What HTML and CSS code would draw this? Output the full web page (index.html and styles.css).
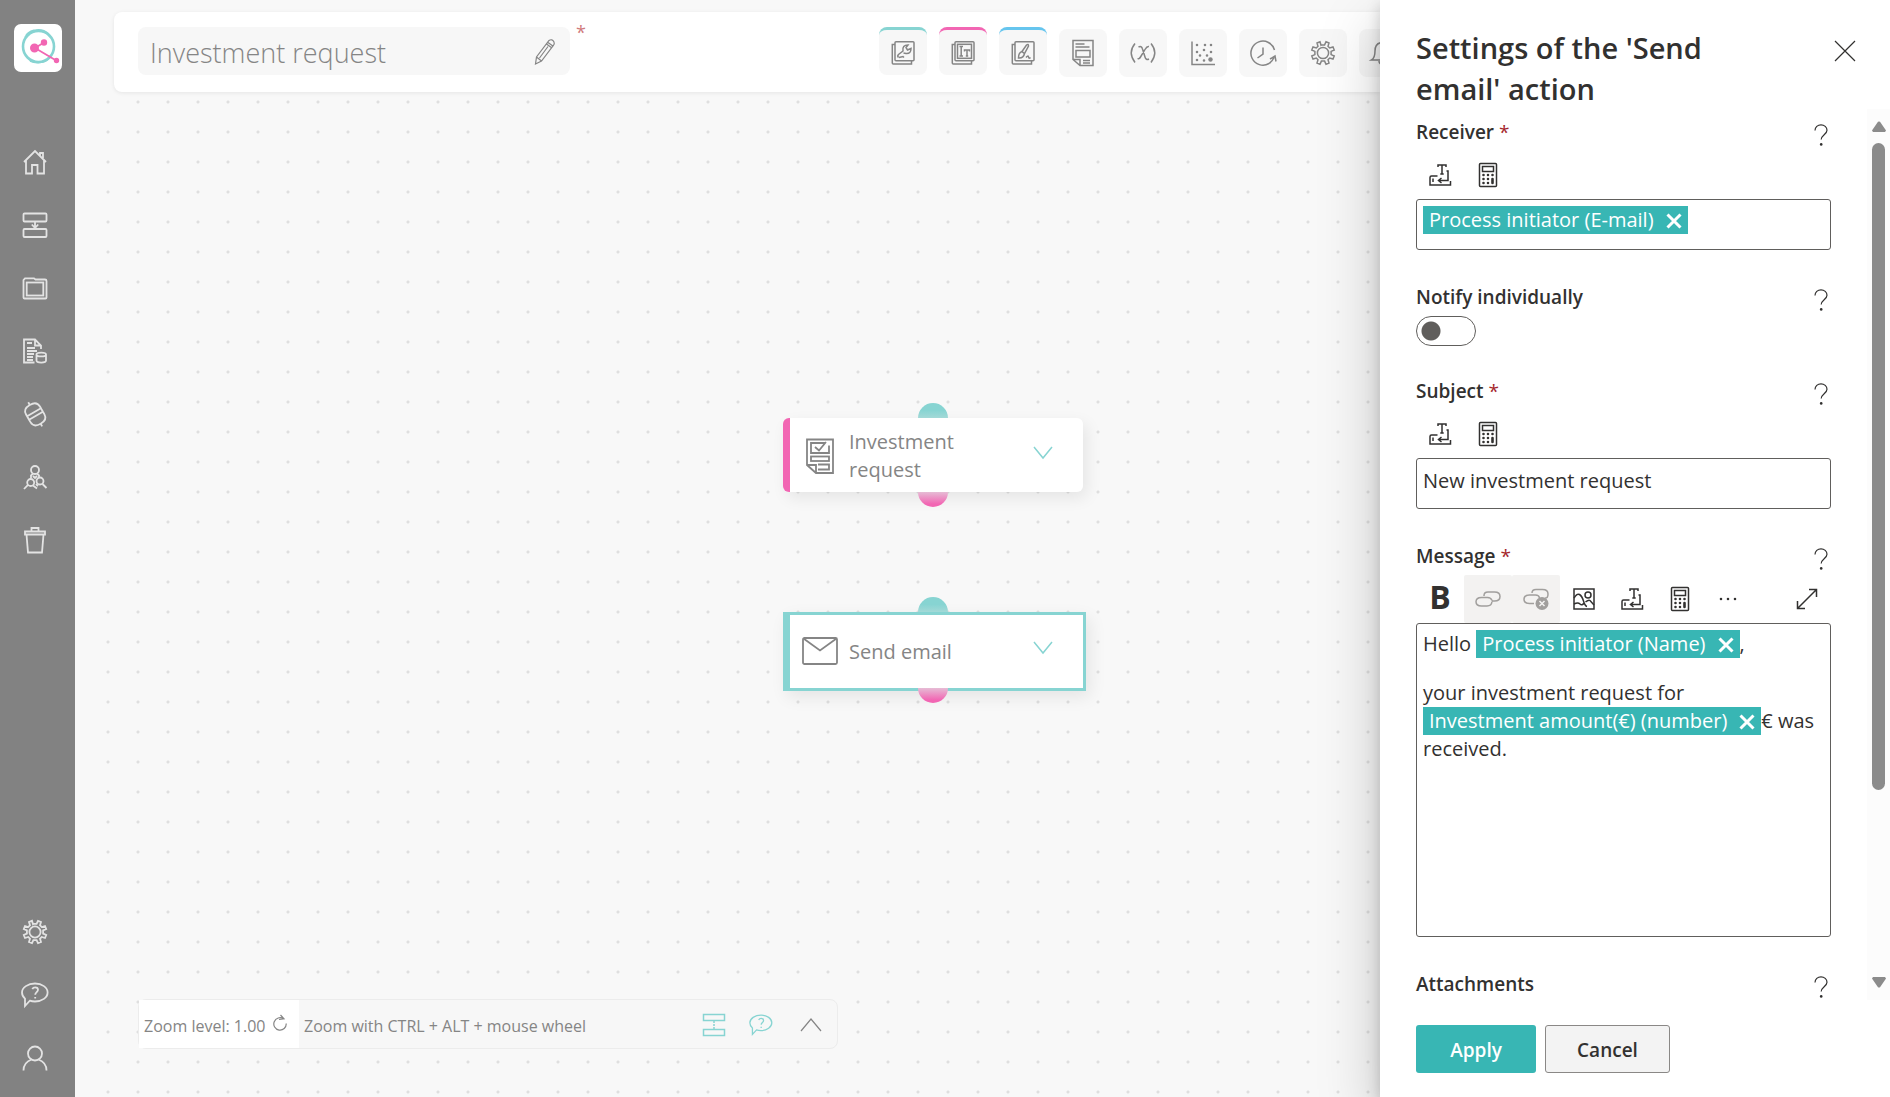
FILE: index.html
```html
<!DOCTYPE html>
<html lang="en">
<head>
<meta charset="utf-8">
<title>Investment request</title>
<link rel="stylesheet" href="styles.css">
</head>
<body>
<svg class="sprite" aria-hidden="true">
  <symbol id="i-gear" viewBox="0 0 26 26"><path d="M11 5.200 10 1.800 7 3 8 6.300 6.300 8 3 7 1.800 10 4.900 11.400V14.600L1.800 16 3 19 6.300 18 8 19.700 7 23 10 24.200 11.400 21.100H14.600L16 24.200 19 23 18 19.700 19.700 18 23 19 24.200 16 21.100 14.600V11.400L24.200 10 23 7 19.700 8 18 6.300 19 3 16 1.800 14.600 4.900H11.400Z"/><circle cx="13" cy="13" r="5.600"/></symbol>
  <symbol id="i-help" viewBox="0 0 30 28"><path d="M15 2.500c7 0 12.600 4 12.600 9s-5.600 9-12.600 9c-2 0-3.600-.2-5.200-.8L5 25V17.600C3 15.900 2 14 2 11.500c0-5 6-9 13-9Z"/><path d="M12.300 8.200c.6-1.300 1.600-1.900 2.900-1.900 1.600 0 2.800 1 2.800 2.500 0 2.300-2.800 2.400-2.800 5M15.200 16v1.600"/></symbol>
  <symbol id="i-question" viewBox="0 0 16 24"><path d="M2 7.500C2 4.200 4.700 1.800 8 1.800s6 2.300 6 5.500c0 4-5.800 5-5.800 9.200"/><circle cx="8.200" cy="21.400" r="1.300" class="fill"/></symbol>
  <symbol id="i-insert" viewBox="0 0 24 24"><path d="M10 4V2h8v2M14 2v9M12.300 11h3.400M18.500 8H20v9.500h-9M13.500 15l-3 2.500 3 2.500M9.500 13H3.500Q2 13 2 14.500V22h20.500v-4M5 15.500V19"/></symbol>
  <symbol id="i-calc" viewBox="0 0 24 26"><rect x="3.500" y="1.500" width="17" height="23" rx="1"/><rect x="6.500" y="4.500" width="11" height="5"/><path class="dots" d="M7.500 13h.01M12 13h.01M16.500 13h.01M7.500 17h.01M12 17h.01M7.500 21h.01M12 21h.01M16.500 17v4"/></symbol>
  <symbol id="i-chevron" viewBox="0 0 20 14"><path d="M1 1l9 11 9-11"/></symbol>
  <symbol id="i-cross" viewBox="0 0 16 16"><path d="M1.500 1.500l13 13M14.500 1.500l-13 13"/></symbol>
  <symbol id="i-stack" viewBox="0 0 26 26"><rect x="5" y="1.800" width="19" height="19" rx="1"/><path d="M5 4.500H2.300v18.500q0 1 1 1H21.500v-3"/></symbol>
</svg>

<nav class="sidebar" aria-label="Main">
  <a class="logo" href="#" aria-label="Start">
    <svg viewBox="0 0 48 48" width="48" height="48">
      <g fill="none" stroke="#87d4d2"><ellipse cx="24.500" cy="22.500" rx="15.500" ry="15.500" stroke-width="2.600"/><path stroke-width="1.400" d="M11 13C17 5 27 3 35 10M14 34c7 7 17 6 23-2M12 11C18 4 30 4 36 13M16 37c6 3 13 2 18-2"/></g>
      <g stroke="#f266b3" stroke-width="1.800" fill="#f266b3"><path d="M21 24L30 18.500M21 24L43 37"/><circle cx="20.500" cy="24" r="3.600"/><circle cx="30" cy="18.500" r="2.300"/><circle cx="42.500" cy="36.500" r="1.800"/></g>
    </svg>
  </a>
  <div class="nav-group">
    <a href="#" aria-label="Home"><svg class="icon" viewBox="0 0 26 26" width="26" height="26"><path d="M2 13L13 2l11 11M4 11.500V24.500h6V16h5.500v8.500H22V11.500M18 6.500V4h3v5"/></svg></a>
    <a href="#" aria-label="Processes"><svg class="icon" viewBox="0 0 26 26" width="26" height="26"><rect x="1.500" y="1.500" width="23" height="8" rx="1"/><rect x="1.500" y="17" width="23" height="8" rx="1"/><path d="M13 9.500v6M9.800 12.500l3.200 3.500 3.200-3.500"/></svg></a>
    <a href="#" aria-label="Folders"><svg class="icon" viewBox="0 0 26 26" width="26" height="26"><path d="M1.500 22.500V5l1.500-1.700h9l1.500 1.200H23q1.500 0 1.500 1.500v16.500q0 1-1 1h-21q-1 0-1-1Z"/><rect x="4.700" y="7.500" width="16.600" height="13"/></svg></a>
    <a href="#" aria-label="Records"><svg class="icon" viewBox="0 0 26 26" width="26" height="26"><path d="M12.500 24.500H2V1.500h11l6 6V11M13 1.500v6h6M5 5h5M5 10h8M5 13h10M5 16h7M5 19h6M5 22h6"/><path d="M14.500 16.500v6c0 2.700 9.500 2.700 9.500 0v-6M14.500 16.500c0-2.600 9.500-2.600 9.500 0s-9.500 2.600-9.500 0Z"/></svg></a>
    <a href="#" aria-label="Connections"><svg class="icon" viewBox="0 0 26 28" width="26" height="28"><g transform="rotate(-30 13 14)"><path d="M5 12V10q0-6.500 8-6.500t8 6.500v2Z M5 16v2.800q0 6.500 8 6.500t8-6.500v-2.800ZM5 12v4M21 12v4"/><path d="M13 3.500V.5M13 25.300v3"/></g></svg></a>
    <a href="#" aria-label="Roles"><svg class="icon" viewBox="0 0 26 26" width="26" height="26"><circle cx="13" cy="6" r="4"/><circle cx="8.700" cy="18.500" r="3.500"/><circle cx="18" cy="17" r="3.500"/><path d="M9 14v-2.500l2-1.800M17 13v-1.500l-2-1.800M11 12l2 2 2-2M2 25l4-4.200M11 21.500l4 3M14 20l2 2M20.500 20l4 4"/></svg></a>
    <a href="#" aria-label="Trash"><svg class="icon" viewBox="0 0 26 28" width="26" height="28"><path d="M3 5.500h20v3H3ZM4.500 8.500l1.500 18h14l1.500-18M9.500 5V2h7v3"/></svg></a>
  </div>
  <div class="nav-group nav-bottom">
    <a href="#" aria-label="Settings"><svg class="icon" width="26" height="26"><use href="#i-gear"/></svg></a>
    <a href="#" aria-label="Help"><svg class="icon" width="30" height="28"><use href="#i-help"/></svg></a>
    <a href="#" aria-label="Account"><svg class="icon" viewBox="0 0 26 26" width="26" height="26"><circle cx="13" cy="8.500" r="7"/><path d="M1.500 25.500c0-6 4-9.500 8-11M16.500 14.500c4 1.500 8 5 8 11"/></svg></a>
  </div>
</nav>

<main class="workspace">
  <header class="topbar">
    <label class="title-box">
      <input class="title-input" type="text" value="Investment request" aria-label="Process name">
      <svg class="icon thin" viewBox="0 0 22 28" width="22" height="28"><path d="M1.500 26l1-7L15 2.500q3-2 5 1.500 1 2-1 4L7.500 23ZM2.500 19l5 4M12.500 6l5.500 4M13.700 4.300l5.500 4M14 8.500L5.500 20"/></svg>
    </label>
    <span class="required">*</span>
    <div class="tools">
      <button class="tool tool-teal" aria-label="Actions"><svg class="icon" width="26" height="26" viewBox="0 0 26 26"><use href="#i-stack"/><path d="M8.500 17.500Q7 16 8.500 14.500l4.500-3.500Q12 5 18 5l-2 2.500 1.500 2.500 3.500-1.500q0 5.500-5 5l-2.500-.5M9 17.500l4-1 1 1"/></svg></button>
      <button class="tool tool-pink" aria-label="Forms"><svg class="icon" width="26" height="26" viewBox="0 0 26 26"><use href="#i-stack"/><rect x="7.500" y="4.300" width="14" height="14"/><path d="M9.500 6.500h3.500M9.500 16h3.500M11.200 6.500V16M14.500 11.500V10h5v1.500M17 10v6M15.800 16h2.400"/></svg></button>
      <button class="tool tool-blue" aria-label="Design"><svg class="icon" width="26" height="26" viewBox="0 0 26 26"><use href="#i-stack"/><path d="M12 11.500l4.500-6.500q2-1.500 2 1l-4 7.500ZM12 11.500q-3.500 1-3.500 6.500 5 .5 6-4.500M16 17.500q2-2.500 2.500-.5t2 .5"/></svg></button>
      <button class="tool" aria-label="Form data"><svg class="icon" width="24" height="28" viewBox="0 0 24 28"><path d="M2 1.500h20v25H9L2 20.500ZM2 20.500h7v6M4.500 5h9M4.500 8h14M12 21.500h7M12 24h7"/><rect x="5" y="11.500" width="14" height="6.500"/></svg></button>
      <button class="tool" aria-label="Variables"><svg class="icon" width="28" height="24" viewBox="0 0 28 24"><path d="M6 2.500Q-1.500 11.500 6 21.500M22 2.500q7.500 9 0 19M9.500 6q3-1.500 4 2l2.500 8q1 3.500 4 2M20 5.500q-2-.5-4 3l-4.500 7.500q-1.500 2.500-3 1.500"/></svg></button>
      <button class="tool" aria-label="Chart"><svg class="icon" width="26" height="26" viewBox="0 0 26 26"><path d="M2 1.500v23h23"/><path class="dots" d="M7 5h.01M15 5h.01M21 5h.01M14 10h.01M7 12h.01M21 12h.01M10 15.500h.01M17 15.500h.01M7 20h.01M14 20.500h.01"/><circle class="fill" cx="20.500" cy="19.500" r="2.200"/></svg></button>
      <button class="tool" aria-label="History"><svg class="icon" width="28" height="26" viewBox="0 0 28 26"><path d="M25.500 10A12 12 0 1 0 20 23.500M14 7.500v6.500l-5.500 4M20 23.500q3.500-2.500 5-6M21 19l5-3 1 5.500"/></svg></button>
      <button class="tool" aria-label="Settings"><svg class="icon" width="26" height="26"><use href="#i-gear"/></svg></button>
      <button class="tool" aria-label="Notifications"><svg class="icon" width="26" height="26" viewBox="0 0 26 26"><path d="M1.500 20q3.500-2 3.500-9 0-8.500 8-8.500t8 8.500q0 7 3.500 9ZM9 21q0 3.500 4 3.500t4-3.500"/></svg></button>
    </div>
  </header>

  <section class="canvas" aria-label="Process diagram">
    <article class="node node-form">
      <svg class="icon bold-line" width="28" height="36" viewBox="0 0 28 36"><path d="M1 1.500h26v33.500H10L1 27ZM1 27h9v8"/><path d="M19 5H5v10h18V7.500M9 9l4 3.500L20 4"/><rect x="5" y="18.500" width="18" height="4.500"/><path d="M12 26.500h11v5H12"/></svg>
      <span class="node-name">Investment request</span>
      <button class="expand" aria-label="Expand"><svg class="icon" width="20" height="14"><use href="#i-chevron"/></svg></button>
    </article>
    <article class="node node-mail">
      <svg class="icon bold-line" width="36" height="28" viewBox="0 0 36 28"><rect x="1" y="1" width="34" height="26" rx="1.500"/><path d="M1.500 1.500L18 13.500l16.500-12"/></svg>
      <span class="node-name">Send email</span>
      <button class="expand" aria-label="Expand"><svg class="icon" width="20" height="14"><use href="#i-chevron"/></svg></button>
    </article>
  </section>

  <footer class="zoombar">
    <div class="zoom-level"><span>Zoom level: 1.00</span>
      <button aria-label="Reset zoom"><svg class="icon thin" width="14" height="18" viewBox="0 0 14 18"><path d="M10.500 4.800A6.200 6.200 0 1 0 13.200 9.500M7.500 1l3.500 3.800-5 .7"/></svg></button>
    </div>
    <span class="zoom-hint">Zoom with CTRL + ALT + mouse wheel</span>
    <div class="zoom-actions">
      <button aria-label="Align"><svg class="icon" width="24" height="24" viewBox="0 0 24 24"><rect x="1.500" y="1.500" width="21" height="6"/><rect x="1.500" y="16.500" width="21" height="6"/><path stroke-dasharray="2 1" d="M12 8v8"/></svg></button>
      <button aria-label="Help"><svg class="icon" width="26" height="24"><use href="#i-help"/></svg></button>
      <button class="grey" aria-label="More"><svg class="icon thin" width="22" height="14" viewBox="0 0 22 14"><path d="M1 13L11 1l10 12"/></svg></button>
    </div>
  </footer>
</main>

<aside class="panel">
  <header class="panel-head">
    <h1>Settings of the 'Send email' action</h1>
    <button class="close" aria-label="Close"><svg class="icon thin" width="22" height="22" viewBox="0 0 22 22"><path d="M1 1l20 20M21 1L1 21"/></svg></button>
  </header>

  <div class="panel-main">
    <form class="fields" id="settings">
      <div class="field">
        <div class="label-row"><span id="l-receiver">Receiver <b>*</b></span><button type="button" aria-label="Help for receiver"><svg class="icon thin" width="16" height="24"><use href="#i-question"/></svg></button></div>
        <div class="field-tools">
          <button type="button" aria-label="Insert field"><svg class="icon" width="24" height="24"><use href="#i-insert"/></svg></button>
          <button type="button" aria-label="Insert calculation"><svg class="icon" width="24" height="26"><use href="#i-calc"/></svg></button>
        </div>
        <div class="box" role="textbox" contenteditable="true" aria-labelledby="l-receiver"><span class="tag">Process initiator (E-mail)<svg class="x" width="16" height="16"><use href="#i-cross"/></svg></span></div>
      </div>

      <div class="field field-toggle">
        <div class="label-row"><label for="notify">Notify individually</label><button type="button" aria-label="Help for notify individually"><svg class="icon thin" width="16" height="24"><use href="#i-question"/></svg></button></div>
        <input class="toggle" type="checkbox" role="switch" id="notify">
      </div>

      <div class="field">
        <div class="label-row"><label for="subject">Subject <b>*</b></label><button type="button" aria-label="Help for subject"><svg class="icon thin" width="16" height="24"><use href="#i-question"/></svg></button></div>
        <div class="field-tools">
          <button type="button" aria-label="Insert field"><svg class="icon" width="24" height="24"><use href="#i-insert"/></svg></button>
          <button type="button" aria-label="Insert calculation"><svg class="icon" width="24" height="26"><use href="#i-calc"/></svg></button>
        </div>
        <input class="box" type="text" id="subject" value="New investment request">
      </div>

      <div class="field">
        <div class="label-row"><span id="l-message">Message <b>*</b></span><button type="button" aria-label="Help for message"><svg class="icon thin" width="16" height="24"><use href="#i-question"/></svg></button></div>
        <div class="field-tools">
          <button type="button" class="bold" aria-label="Bold">B</button>
          <button type="button" disabled aria-label="Link"><svg class="icon" width="26" height="18" viewBox="0 0 26 18"><path d="M9 6V5.500Q9 2 13 2h6.500Q25 2 25 6.500T19.500 11H17M17 11.500Q16.500 16 12 16H6.500Q1 16 1 11.800T6.500 7.500h6q3.500 0 4.500 3"/></svg></button>
          <button type="button" disabled aria-label="Remove link"><svg class="icon" width="26" height="22" viewBox="0 0 26 22"><path d="M9 5Q9 1.500 13 1.500h6.500Q25 1.500 25 6T22 10M11 15.500H6.500Q1 15.500 1 11.300T6.500 7h6q3.500 0 4 3"/><circle class="fill" cx="19" cy="15.500" r="6.500"/><path class="cut" d="M16.500 13l5 5M21.500 13l-5 5"/></svg></button>
          <button type="button" aria-label="Insert image"><svg class="icon" width="22" height="22" viewBox="0 0 22 22"><rect x="1" y="1" width="20" height="20"/><circle cx="15" cy="7" r="3"/><path d="M1 10q3-5 5.500-3.500T10.500 13q1.500 5 3.500 5.500M1 16q4-2 6 0t4-1M12.500 14q3-2.500 4.500-1.500L21 17"/></svg></button>
          <button type="button" aria-label="Insert field"><svg class="icon" width="24" height="24"><use href="#i-insert"/></svg></button>
          <button type="button" aria-label="Insert calculation"><svg class="icon" width="24" height="26"><use href="#i-calc"/></svg></button>
          <button type="button" aria-label="More"><svg class="icon" width="18" height="4" viewBox="0 0 18 4"><path class="dots" d="M2 2h.01M9 2h.01M16 2h.01"/></svg></button>
          <button type="button" class="enlarge" aria-label="Enlarge"><svg class="icon" width="22" height="22" viewBox="0 0 22 22"><path d="M1.500 20.500l19-19M13 1.500h7.500V9M1.500 13v7.500H9"/></svg></button>
        </div>
        <div class="box editor" role="textbox" aria-multiline="true" contenteditable="true" aria-labelledby="l-message"><p>Hello <span class="tag">Process initiator (Name)<svg class="x" width="16" height="16"><use href="#i-cross"/></svg></span>,</p><p>your investment request for <span class="tag">Investment amount(€) (number)<svg class="x" width="16" height="16"><use href="#i-cross"/></svg></span>€ was received.</p></div>
      </div>

      <div class="field">
        <div class="label-row"><span>Attachments</span><button type="button" aria-label="Help for attachments"><svg class="icon thin" width="16" height="24"><use href="#i-question"/></svg></button></div>
      </div>
    </form>
    <div class="scrollbar" aria-hidden="true">
      <svg width="14" height="11" viewBox="0 0 14 11"><path d="M1 11h12l1-1.500L8 .8Q7 0 6 .8L0 9.500Z"/></svg>
      <div class="track"><div class="thumb"></div></div>
      <svg width="14" height="11" viewBox="0 0 14 11"><path d="M1 0h12l1 1.500-6 8.700q-1 .8-2 0L0 1.500Z"/></svg>
    </div>
  </div>

  <footer class="panel-foot">
    <button class="btn btn-primary" type="submit" form="settings">Apply</button>
    <button class="btn" type="button">Cancel</button>
  </footer>
</aside>
</body>
</html>
```
FILE: styles.css
```css
* { box-sizing: border-box; }

body {
  margin: 0;
  height: 100vh;
  display: flex;
  overflow: hidden;
  background: #f8f8f8;
  color: #323130;
  font-family: "Open Sans", "Noto Sans", sans-serif;
  font-size: 20px;
}

button, input { font: inherit; color: inherit; }
button { border: 0; padding: 0; background: none; cursor: pointer; }

.sprite { display: none; }
.icon { fill: none; stroke: currentColor; stroke-width: 1.5; flex: none; overflow: visible; }
.icon.thin { stroke-width: 1.2; }
.icon.bold-line { stroke-width: 1.8; }
.fill { fill: currentColor; stroke: none; }
.dots { stroke-width: 2.6; stroke-linecap: round; }

/* Left navigation */
.sidebar {
  flex: none;
  width: 75px;
  background: #828282;
  color: #e3e3e3;
  display: flex;
  flex-direction: column;
  padding: 24px 0 8px;
}
.sidebar .icon { stroke-width: 1.8; }
.logo { width: 48px; height: 48px; margin: 0 0 58px 14px; border-radius: 7px; background: #fff; }
.nav-group { display: flex; flex-direction: column; width: 69px; }
.nav-group a { height: 63px; display: flex; align-items: center; justify-content: center; color: inherit; }
.nav-bottom { margin-top: auto; }

/* Workspace */
.workspace {
  flex: 1;
  min-width: 0;
  position: relative;
  overflow: hidden;
  padding: 12px 0 0 18px;
  display: flex;
  flex-direction: column;
  color: #858585;
}
.topbar {
  height: 80px;
  margin-left: 21px;
  padding: 15px 0 0 24px;
  display: flex;
  align-items: flex-start;
  background: #fff;
  border-radius: 8px 0 0 8px;
  box-shadow: 0 1px 4px rgba(0, 0, 0, .08);
}
.title-box {
  width: 432px;
  height: 48px;
  padding: 2px 14px 0 12px;
  display: flex;
  align-items: center;
  border-radius: 8px;
  background: #f7f7f7;
}
.title-input { flex: 1; min-width: 0; border: 0; padding: 0; background: none; font-size: 27px; font-weight: 300; }
.required { margin: -7px 0 0 6px; font-size: 18px; color: #d07a7c; }
.tools { display: flex; gap: 12px; margin: 0 -27px 0 auto; }
.tool {
  flex: none;
  width: 48px;
  height: 48px;
  margin-top: 2px;
  display: flex;
  align-items: center;
  justify-content: center;
  border-radius: 8px;
  background: #f7f7f7;
}
.tool-teal, .tool-pink, .tool-blue { margin-top: 0; border-top: 3px solid #87d4d2; }
.tool-pink { border-color: #f266b3; }
.tool-blue { border-color: #66c5ee; }

.canvas {
  flex: 1;
  position: relative;
  background: radial-gradient(circle, #dfdfdf 1px, transparent 2px) 0 -5px / 30px 30px;
}
.node {
  position: absolute;
  left: 690px;
  width: 300px;
  height: 74px;
  padding: 2px 30px 0 16px;
  display: flex;
  align-items: center;
  background: #fff;
  border-left: 7px solid #f266b3;
  border-radius: 6px;
  box-shadow: 4px 6px 16px rgba(0, 0, 0, .08);
  line-height: 28px;
}
.node::before, .node::after {
  content: "";
  position: absolute;
  left: 128px;
  width: 30px;
  height: 15px;
}
.node::before {
  bottom: 100%;
  border-radius: 15px 15px 0 0;
  background: linear-gradient(#87d4d2 50%, #a3d9d7);
}
.node::after {
  top: 100%;
  border-radius: 0 0 15px 15px;
  background: linear-gradient(#e6bcd5, #f266b3 80%);
}
.node-form { top: 326px; }
.node-mail {
  top: 520px;
  width: 303px;
  height: 79px;
  padding: 0 30px 2px 12px;
  border: 3px solid #87d4d2;
  border-left-width: 7px;
  border-radius: 0;
}
.node-mail::before { margin-bottom: 3px; }
.node-name { width: 130px; margin-left: 15px; }
.node-mail .node-name { margin: 2px 0 0 11px; }
.expand { margin: 0 0 6px auto; height: 14px; display: flex; color: #87d4d2; }

.zoombar {
  position: absolute;
  left: 63px;
  bottom: 48px;
  width: 700px;
  height: 50px;
  display: flex;
  align-items: center;
  border: 1px solid #ececec;
  border-radius: 8px;
  background: #f7f7f7;
  font-size: 16px;
}
.zoom-level { width: 160px; height: 48px; padding-left: 5px; display: flex; align-items: center; gap: 8px; background: #fff; }
.zoom-level span, .zoom-hint { padding-top: 3px; }
.zoom-level button { height: 20px; display: flex; }
.zoom-hint { margin-left: 5px; }
.zoom-actions { margin: 2px 15px 0 auto; display: flex; align-items: center; gap: 22px; color: #87d4d2; }
.zoom-actions button { display: flex; }
.zoom-actions .grey { margin-left: 4px; color: #858585; }

/* Settings panel */
.panel {
  flex: none;
  width: 510px;
  position: relative;
  display: flex;
  flex-direction: column;
  background: #fff;
  box-shadow: 0 26px 58px rgba(0, 0, 0, .22), 0 5px 14px rgba(0, 0, 0, .18);
}
.panel-head { padding: 27px 34px 0 36px; display: flex; justify-content: space-between; align-items: flex-start; }
.panel-head h1 { margin: 0; width: 330px; font-size: 29px; font-weight: 600; line-height: 41px; }
.close { margin-top: 13px; height: 22px; display: flex; }

.panel-main { flex: 1; min-height: 0; display: flex; }
.fields { flex: 1; overflow: hidden; padding: 10px 36px 0; }
.field { margin-bottom: 34px; }
.field-toggle { margin-bottom: 32px; }
.label-row { height: 32px; display: flex; justify-content: space-between; font-size: 19px; line-height: 26px; font-weight: 600; }
.label-row b { color: #a4262c; font-weight: 400; }
.label-row button { height: 32px; margin-right: 2px; display: flex; align-items: center; }
.field-tools { display: flex; }
.field-tools button { width: 48px; height: 48px; display: flex; align-items: center; justify-content: center; border-radius: 2px; }
.field-tools button:disabled { background: #f3f2f1; color: #a19f9d; }
.field-tools .cut { stroke: #f3f2f1; }
.field-tools .bold { font-size: 32px; font-weight: 700; line-height: 44px; align-items: flex-start; }
.field-tools .enlarge { margin-left: auto; }

.box {
  display: block;
  width: 100%;
  height: 51px;
  padding: 6px;
  border: 1px solid #605e5c;
  border-radius: 3px;
  background: #fff;
  line-height: 28px;
}
input.box { padding-bottom: 13px; }
.editor { height: 314px; }
.editor p { margin: 0 0 21px; }
.tag { display: inline-block; height: 28px; padding: 0 6px; background: #38b6b4; color: #fff; vertical-align: top; }
.x { margin: 0 0 -2px 12px; stroke: #fff; stroke-width: 3; }

.toggle {
  appearance: none;
  display: block;
  width: 60px;
  height: 30px;
  margin: 0;
  border: 1px solid #605e5c;
  border-radius: 15px;
  background: radial-gradient(circle at 14px 14px, #605e5c 9px, transparent 10px);
}

.scrollbar { width: 23px; padding: 12px 0; display: flex; flex-direction: column; align-items: center; background: #fcfcfc; fill: #8b8b8b; }
.track { flex: 1; width: 13px; padding: 11px 0 4px; }
.thumb { height: 78%; border-radius: 7px; background: #8b8b8b; }

.panel-foot { padding: 25px 36px 24px; display: flex; gap: 9px; }
.btn { width: 125px; height: 48px; padding-top: 2px; border: 1px solid #8a8886; border-radius: 3px; background: #f3f3f3; font-size: 19px; font-weight: 600; }
.btn-primary { width: 120px; border: 0; background: #38b6b4; color: #fff; }
```
